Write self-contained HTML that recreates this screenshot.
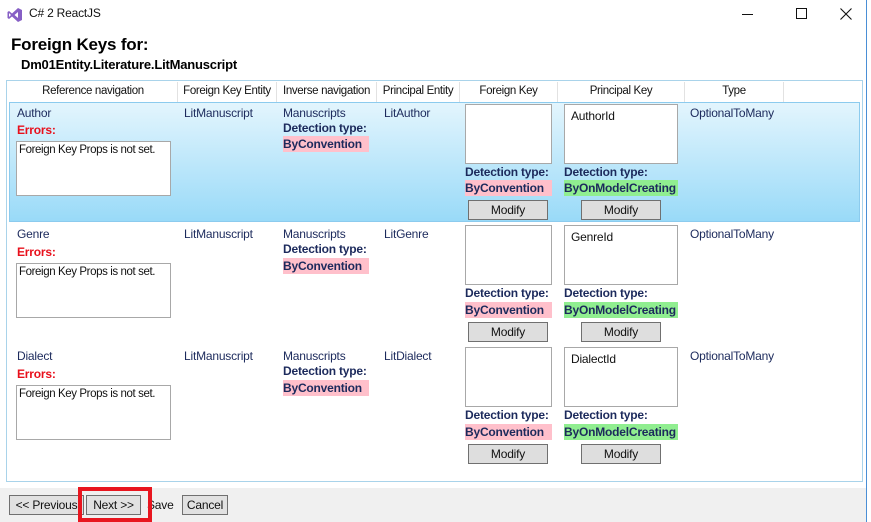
<!DOCTYPE html>
<html><head><style>
*{margin:0;padding:0;box-sizing:border-box}
body{width:871px;height:522px;background:#fff;font-family:"Segoe UI","Liberation Sans",sans-serif;font-size:12px;letter-spacing:-0.2px;color:#1c2a5c;position:relative;overflow:hidden}
.a{position:absolute;white-space:nowrap}
.win{position:absolute;left:0;top:0;width:867px;height:522px;border-right:1px solid #4a8fd6}
.hdr{position:absolute;top:82px;height:20px;border-right:1px solid #e2e2e2;text-align:center;color:#111;line-height:19px;background:#fff;white-space:nowrap;overflow:hidden;font-size:11.5px;letter-spacing:-0.35px}
.box{position:absolute;background:#fff;border:1px solid #a8a8a8;color:#111;white-space:nowrap;overflow:hidden}
.b{font-weight:bold}
.btn{position:absolute;width:80px;height:20px;background:#dedede;border:1px solid #707070;text-align:center;line-height:18px;color:#111;white-space:nowrap}
.pink{background:#ffc0cb}
.green{background:#90ee90}
.err{font-size:11.5px;letter-spacing:-0.4px}
</style></head><body>
<div class="win"></div>
<svg class="a" style="left:7px;top:7px" width="16" height="16" viewBox="0 0 16 16"><path d="M11 1 L15 3 V13 L11 15 L5 9.5 L2 12 L0.5 11 V5 L2 4 L5 6.5 Z M11 5 L7.5 8 L11 11 Z M2 6 V10 L4 8 Z" fill="#865fc5" fill-rule="evenodd"/></svg>
<div class="a" style="left:29px;top:6px;color:#111;font-size:12px">C# 2 ReactJS</div>
<div class="a" style="left:742px;top:14px;width:11px;height:1px;background:#111"></div>
<div class="a" style="left:796px;top:8px;width:11px;height:11px;border:1px solid #111"></div>
<svg class="a" style="left:840px;top:8px" width="12" height="12"><path d="M0.5 0.5 L11.5 11.5 M11.5 0.5 L0.5 11.5" stroke="#111" stroke-width="1.1"/></svg>
<div class="a b" style="left:11px;top:35px;font-size:17px;color:#000">Foreign Keys for:</div>
<div class="a b" style="left:21px;top:57px;font-size:13px;color:#000">Dm01Entity.Literature.LitManuscript</div>

<div class="a" style="left:6px;top:80px;width:857px;height:402px;border:1px solid #a9d3ea"></div>
<div class="hdr" style="left:9px;width:169px">Reference navigation</div>
<div class="hdr" style="left:178px;width:99px">Foreign Key Entity</div>
<div class="hdr" style="left:277px;width:100px">Inverse navigation</div>
<div class="hdr" style="left:377px;width:83px">Principal Entity</div>
<div class="hdr" style="left:460px;width:98px">Foreign Key</div>
<div class="hdr" style="left:558px;width:127px">Principal Key</div>
<div class="hdr" style="left:685px;width:99px">Type</div>

<div class="a" style="left:9px;top:102px;width:851px;height:120px;background:linear-gradient(#e3f5fd,#99daf8);border:1px solid #8ccbee"></div>

<div class="a" style="left:0;top:488px;width:866px;height:34px;background:#f0f0f0"></div>
<div class="btn" style="left:9px;top:495px;width:75px;background:#e1e1e1">&lt;&lt; Previous</div>
<div class="a" style="left:147px;top:498px;color:#111">Save</div>
<div class="btn" style="left:86px;top:495px;width:55px;background:#e1e1e1">Next &gt;&gt;</div>
<div class="btn" style="left:182px;top:495px;width:46px;background:#e1e1e1">Cancel</div>
<div class="a" style="left:78px;top:487px;width:74px;height:35px;border:4px solid #e8161f"></div>

<div class="a" style="left:17px;top:106px">Author</div>
<div class="a b" style="left:17px;top:123px;color:#e8101c">Errors:</div>
<div class="box err" style="left:16px;top:141px;width:155px;height:55px;padding:2px 2px">Foreign Key Props is not set.</div>
<div class="a" style="left:184px;top:106px">LitManuscript</div>
<div class="a" style="left:283px;top:106px">Manuscripts</div>
<div class="a b" style="left:283px;top:121px">Detection type:</div>
<div class="a b pink" style="left:283px;top:136px;width:86px;height:16px;line-height:16px">ByConvention</div>
<div class="a" style="left:384px;top:106px">LitAuthor</div>
<div class="box" style="left:465px;top:104px;width:87px;height:60px"></div>
<div class="box" style="left:564px;top:104px;width:114px;height:60px;padding:4px 6px">AuthorId</div>
<div class="a" style="left:690px;top:106px">OptionalToMany</div>
<div class="a b" style="left:465px;top:165px">Detection type:</div>
<div class="a b pink" style="left:465px;top:180px;width:87px;height:16px;line-height:16px">ByConvention</div>
<div class="a b" style="left:564px;top:165px">Detection type:</div>
<div class="a b green" style="left:564px;top:180px;width:114px;height:16px;line-height:16px">ByOnModelCreating</div>
<div class="btn" style="left:468px;top:200px">Modify</div>
<div class="btn" style="left:581px;top:200px">Modify</div>

<div class="a" style="left:17px;top:227px">Genre</div>
<div class="a b" style="left:17px;top:245px;color:#e8101c">Errors:</div>
<div class="box err" style="left:16px;top:263px;width:155px;height:55px;padding:2px 2px">Foreign Key Props is not set.</div>
<div class="a" style="left:184px;top:227px">LitManuscript</div>
<div class="a" style="left:283px;top:227px">Manuscripts</div>
<div class="a b" style="left:283px;top:242px">Detection type:</div>
<div class="a b pink" style="left:283px;top:258px;width:86px;height:16px;line-height:16px">ByConvention</div>
<div class="a" style="left:384px;top:227px">LitGenre</div>
<div class="box" style="left:465px;top:225px;width:87px;height:60px"></div>
<div class="box" style="left:564px;top:225px;width:114px;height:60px;padding:4px 6px">GenreId</div>
<div class="a" style="left:690px;top:227px">OptionalToMany</div>
<div class="a b" style="left:465px;top:286px">Detection type:</div>
<div class="a b pink" style="left:465px;top:302px;width:87px;height:16px;line-height:16px">ByConvention</div>
<div class="a b" style="left:564px;top:286px">Detection type:</div>
<div class="a b green" style="left:564px;top:302px;width:114px;height:16px;line-height:16px">ByOnModelCreating</div>
<div class="btn" style="left:468px;top:322px">Modify</div>
<div class="btn" style="left:581px;top:322px">Modify</div>

<div class="a" style="left:17px;top:349px">Dialect</div>
<div class="a b" style="left:17px;top:367px;color:#e8101c">Errors:</div>
<div class="box err" style="left:16px;top:385px;width:155px;height:55px;padding:2px 2px">Foreign Key Props is not set.</div>
<div class="a" style="left:184px;top:349px">LitManuscript</div>
<div class="a" style="left:283px;top:349px">Manuscripts</div>
<div class="a b" style="left:283px;top:364px">Detection type:</div>
<div class="a b pink" style="left:283px;top:380px;width:86px;height:16px;line-height:16px">ByConvention</div>
<div class="a" style="left:384px;top:349px">LitDialect</div>
<div class="box" style="left:465px;top:347px;width:87px;height:60px"></div>
<div class="box" style="left:564px;top:347px;width:114px;height:60px;padding:4px 6px">DialectId</div>
<div class="a" style="left:690px;top:349px">OptionalToMany</div>
<div class="a b" style="left:465px;top:408px">Detection type:</div>
<div class="a b pink" style="left:465px;top:424px;width:87px;height:16px;line-height:16px">ByConvention</div>
<div class="a b" style="left:564px;top:408px">Detection type:</div>
<div class="a b green" style="left:564px;top:424px;width:114px;height:16px;line-height:16px">ByOnModelCreating</div>
<div class="btn" style="left:468px;top:444px">Modify</div>
<div class="btn" style="left:581px;top:444px">Modify</div>
</body></html>
